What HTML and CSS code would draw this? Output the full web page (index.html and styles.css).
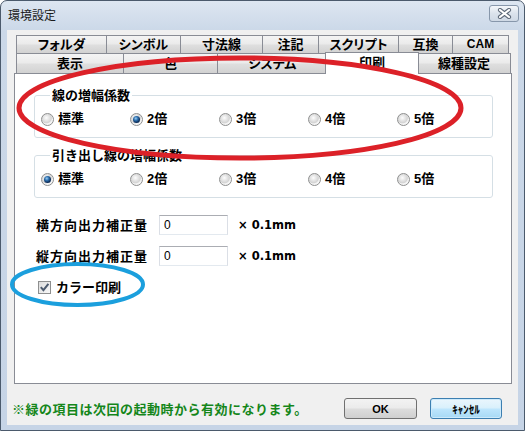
FILE: index.html
```html
<!DOCTYPE html>
<html lang="ja">
<head>
  <meta charset="UTF-8">
  <title>環境設定</title>
  <link rel="stylesheet" href="styles.css">
</head>
<body>
  <div class="window">
    <div class="titlebar">
      <span class="title">環境設定</span>
      <button class="close" type="button" aria-label="閉じる">
        <svg width="15" height="11" viewBox="0 0 15 11">
          <path d="M3 2 L12 9 M12 2 L3 9" stroke="#5f6b7a" stroke-width="4.2" stroke-linecap="round"/>
          <path d="M3 2 L12 9 M12 2 L3 9" stroke="#ffffff" stroke-width="2.2" stroke-linecap="round"/>
        </svg>
      </button>
    </div>

    <div class="client">
      <div class="tabs">
        <div class="tab-row row-back">
          <div class="tab">フォルダ</div>
          <div class="tab">シンボル</div>
          <div class="tab">寸法線</div>
          <div class="tab">注記</div>
          <div class="tab">スクリプト</div>
          <div class="tab">互換</div>
          <div class="tab latin">CAM</div>
        </div>
        <div class="tab-row row-front">
          <div class="tab">表示</div>
          <div class="tab">色</div>
          <div class="tab">システム</div>
          <div class="tab selected">印刷</div>
          <div class="tab">線種設定</div>
        </div>
      </div>

      <div class="panel">
        <fieldset class="group">
          <legend>線の増幅係数</legend>
          <div class="options">
            <label class="option"><span class="radio"></span>標準</label>
            <label class="option"><span class="radio checked"></span>2倍</label>
            <label class="option"><span class="radio"></span>3倍</label>
            <label class="option"><span class="radio"></span>4倍</label>
            <label class="option"><span class="radio"></span>5倍</label>
          </div>
        </fieldset>

        <fieldset class="group second">
          <legend>引き出し線の増幅係数</legend>
          <div class="options">
            <label class="option"><span class="radio checked"></span>標準</label>
            <label class="option"><span class="radio"></span>2倍</label>
            <label class="option"><span class="radio"></span>3倍</label>
            <label class="option"><span class="radio"></span>4倍</label>
            <label class="option"><span class="radio"></span>5倍</label>
          </div>
        </fieldset>

        <div class="field first">
          <span class="field-label">横方向出力補正量</span>
          <input class="textbox" type="text" value="0">
          <span class="unit">× 0.1mm</span>
        </div>
        <div class="field">
          <span class="field-label">縦方向出力補正量</span>
          <input class="textbox" type="text" value="0">
          <span class="unit">× 0.1mm</span>
        </div>

        <label class="check">
          <span class="checkbox">
            <svg width="11" height="11" viewBox="0 0 11 11">
              <path d="M1.8 5.2 L4.4 8.2 L9.4 1.8" fill="none" stroke="#4c5a6e" stroke-width="2"/>
            </svg>
          </span>
          カラー印刷
        </label>
      </div>

      <div class="footer">
        <p class="note">※緑の項目は次回の起動時から有効になります。</p>
        <div class="buttons">
          <button class="btn" type="button">OK</button>
          <button class="btn default" type="button">ｷｬﾝｾﾙ</button>
        </div>
      </div>
    </div>

    <!-- hand-drawn marks over the dialog -->
    <svg class="marks" width="525" height="431" viewBox="0 0 525 431">
      <ellipse cx="240" cy="108" rx="221" ry="50" fill="none" stroke="#dc2128" stroke-width="5"/>
      <ellipse cx="77.5" cy="284.5" rx="65.5" ry="20.5" fill="none" stroke="#1b9fdd" stroke-width="4"/>
    </svg>
  </div>
</body>
</html>
```

FILE: styles.css
```css
body {
  margin: 0;
  font-family: "Noto Sans CJK JP", sans-serif;
}

.window {
  position: relative;
  width: 525px;
  height: 431px;
  box-sizing: border-box;
  border: 1px solid #4b5a6c;
  border-radius: 7px 7px 0 0;
  background: linear-gradient(#dde6f1, #cbd8e8 30px, #c6d4e6);
  display: flex;
  flex-direction: column;
  overflow: hidden;
}

.titlebar {
  height: 29px;
  flex: none;
  display: flex;
  justify-content: space-between;
  align-items: flex-start;
  padding: 0 5px 0 7px;
}
.title {
  font-size: 12px;
  line-height: 16px;
  margin-top: 6px;
  color: #1b1b1b;
}
.close {
  width: 30px;
  height: 17px;
  margin-top: 4px;
  padding: 0;
  box-sizing: border-box;
  border: 1px solid #8797ab;
  border-radius: 3px;
  background: linear-gradient(#f4f7fa, #dbe3ec 50%, #cfd9e5);
  display: flex;
  align-items: center;
  justify-content: center;
}

.client {
  flex: 1;
  margin: 0 6px 5px;
  padding-top: 5px;
  background: #f0f0f0;
  display: flex;
  flex-direction: column;
}

/* tabs */
.tabs {
  margin-left: 9px;
  position: relative;
  z-index: 2;
}
.tab-row {
  display: grid;
}
.row-back {
  grid-template-columns: 90px 74px 82px 56px 80px 54px 56px;
  height: 18px;
}
.row-front {
  grid-template-columns: 107px 94px 110px 90px 93px;
  height: 20px;
}
.tab {
  box-sizing: border-box;
  margin-right: -1px;
  border: 1px solid #898c95;
  border-bottom: none;
  background: linear-gradient(#f4f4f4, #ebebeb 45%, #dedede 55%, #d2d2d2);
  font-size: 13px;
  font-weight: bold;
  font-feature-settings: "palt";
  line-height: 16px;
  text-align: center;
  color: #000;
}
.row-front .tab {
  line-height: 18px;
}
.tab.latin {
  font-family: "Liberation Sans", sans-serif;
  font-size: 12px;
}
.tab.selected {
  position: relative;
  margin: -1px -2px -1px -2px;
  background: #ffffff;
  line-height: 18px;
}

/* panel */
.panel {
  position: relative;
  z-index: 1;
  margin-left: 7px;
  width: 498px;
  height: 311px;
  box-sizing: border-box;
  border: 1px solid #898c95;
  background: #ffffff;
  padding: 13px 0 0 19px;
  font-size: 13px;
  font-weight: bold;
  color: #000;
}

.group {
  width: 456px;
  box-sizing: border-box;
  margin: 0;
  padding: 7px 6px 9px;
  border: 1px solid #d5dfe5;
  border-radius: 3px;
}
.group.second {
  margin-top: 9px;
}
.group legend {
  margin-left: 9px;
  padding: 0 2px;
  line-height: 16px;
}
.options {
  display: grid;
  grid-template-columns: repeat(5, 89px);
  height: 18px;
  align-items: center;
}
.option {
  display: flex;
  align-items: center;
  gap: 4px;
  line-height: 16px;
  font-family: "Liberation Sans", "Noto Sans CJK JP", sans-serif;
}

.radio {
  position: relative;
  width: 13px;
  height: 13px;
  box-sizing: border-box;
  border-radius: 50%;
  border: 1px solid #8e8f8f;
  background: radial-gradient(circle at 40% 35%, #fdfdfd 0, #ececec 2px, #d4d4d4 5px, #f4f4f4 6px);
}
.radio.checked::after {
  content: "";
  position: absolute;
  left: 2px;
  top: 2px;
  width: 7px;
  height: 7px;
  border-radius: 50%;
  background: radial-gradient(circle at 40% 35%, #9ccdf3 0, #2f72b0 2px, #0d2f5c 4px);
}

/* correction fields */
.field {
  display: flex;
  align-items: center;
  margin-top: 11px;
  margin-left: 2px;
  height: 20px;
}
.field.first {
  margin-top: 17px;
}
.field-label {
  width: 123px;
  letter-spacing: 1px;
  line-height: 16px;
}
.textbox {
  width: 69px;
  height: 20px;
  box-sizing: border-box;
  margin: 0;
  padding: 0 4px;
  border: 1px solid #dbdfe6;
  border-top-color: #abadb3;
  border-bottom-color: #e3e9ef;
  font-family: "Liberation Sans", sans-serif;
  font-size: 12px;
  color: #000;
  outline: none;
}
.unit {
  margin-left: 10px;
  font-family: "DejaVu Sans", sans-serif;
  font-size: 11.5px;
}

.check {
  display: flex;
  align-items: center;
  gap: 5px;
  margin-top: 13px;
  margin-left: 4px;
  height: 16px;
  line-height: 16px;
}
.checkbox {
  width: 13px;
  height: 13px;
  box-sizing: border-box;
  border: 1px solid #8e8f8f;
  background: linear-gradient(135deg, #dcdcdc, #f8f8f8);
  display: flex;
  align-items: center;
  justify-content: center;
}

/* footer */
.footer {
  display: flex;
  align-items: center;
  justify-content: space-between;
  padding: 14px 16px 0 5px;
}
.note {
  margin: 0;
  font-size: 13px;
  font-weight: bold;
  letter-spacing: 0.5px;
  line-height: 16px;
  color: #14861a;
}
.buttons {
  display: flex;
  gap: 13px;
}
.btn {
  width: 73px;
  height: 21px;
  box-sizing: border-box;
  padding: 0;
  border: 1px solid #707070;
  border-radius: 3px;
  background: linear-gradient(#f3f3f3, #ebebeb 48%, #dddddd 52%, #cfcfcf);
  font-family: "Liberation Sans", "Noto Sans CJK JP", sans-serif;
  font-size: 11px;
  font-weight: bold;
  color: #000;
}
.btn.default {
  width: 72px;
  border-color: #3c7fb1;
  background: linear-gradient(#eaf6fd, #d9f0fc 48%, #bee6fd 52%, #a7d9f5);
  box-shadow: inset 0 0 0 1px #cdeafb;
}

.marks {
  position: absolute;
  left: -1px;
  top: -1px;
  pointer-events: none;
  z-index: 5;
}
```
